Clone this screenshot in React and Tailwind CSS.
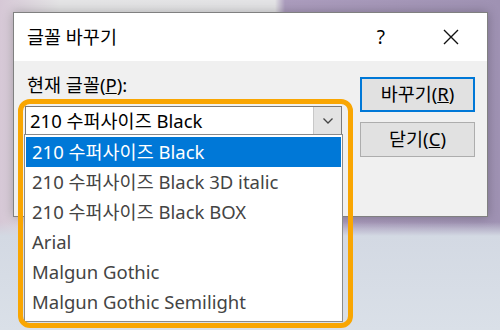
import React from 'react';

const fonts = [
  '210 수퍼사이즈 Black',
  '210 수퍼사이즈 Black 3D italic',
  '210 수퍼사이즈 Black BOX',
  'Arial',
  'Malgun Gothic',
  'Malgun Gothic Semilight',
];

const Hotkey = ({ label, k }) => (
  <span>
    {label}(<span className="underline underline-offset-1">{k}</span>)
  </span>
);

const App = () => {
  return (
    <div className="relative w-[500px] h-[330px] overflow-hidden pl-[13px] pt-[12px] font-['Noto_Sans','Noto_Sans_CJK_KR',sans-serif] text-black bg-[linear-gradient(180deg,rgba(0,0,0,0)_0,rgba(0,0,0,0)_222px,#d3d9e3_236px,#dae0e8_100%),linear-gradient(90deg,#d6c8d6_0,#e4e4e5_12%,#e3e3e5_55%,#ab9cbd_57%,#9f92b3_100%)]">
      {/* dialog window */}
      <div className="w-[475px] h-[205px] flex flex-col border border-[#808080] bg-[#f0f0f0] shadow-[0_0_10px_rgba(0,0,0,0.25)]">
        <div className="h-[48px] bg-white flex items-center pl-[13px] shrink-0">
          <span className="text-[18.5px] leading-none">글꼴 바꾸기</span>
          <span className="ml-auto text-[19px] leading-none mr-[58px]">?</span>
          <svg width="16" height="16" viewBox="0 0 16 16" className="mr-[28px]">
            <path d="M1 1 L15 15 M15 1 L1 15" stroke="#111" strokeWidth="1.4" />
          </svg>
        </div>

        <div className="flex flex-1 pl-[11px] pr-[12px]">
          <div className="flex flex-col pt-[12px]">
            <span className="ml-[2px] text-[18.5px] leading-[24px]">
              현재 <Hotkey label="글꼴" k="P" />:
            </span>
            <div className="mt-[9px] w-[317px] h-[29px] flex bg-white border border-[#7a7a7a]">
              <span className="flex-1 pl-[4px] text-[18.5px] leading-[27px]">210 수퍼사이즈 Black</span>
              <div className="w-[28px] flex items-center justify-center bg-[#e3e3e3] border-l border-[#c8c8c8]">
                <svg width="12" height="8" viewBox="0 0 12 8">
                  <path d="M1.5 1.5 L6 6 L10.5 1.5" fill="none" stroke="#444" strokeWidth="1.3" />
                </svg>
              </div>
            </div>
          </div>

          <div className="ml-auto flex flex-col gap-[10px] pt-[16px]">
            <button className="w-[115px] h-[35px] border-2 border-[#0078d7] bg-[#e1e1e1] text-[18.5px] leading-none">
              <Hotkey label="바꾸기" k="R" />
            </button>
            <button className="w-[115px] h-[35px] border border-[#adadad] bg-[#e1e1e1] text-[18.5px] leading-none">
              <Hotkey label="닫기" k="C" />
            </button>
          </div>
        </div>
      </div>

      {/* opened dropdown list */}
      <div className="absolute left-[24px] top-[134px] w-[319px] h-[188px] bg-white border border-[#8a8a8a] pt-[2px] px-[1px]">
        {fonts.map((f, i) => (
          <div
            key={f}
            className={
              i === 0
                ? 'h-[30px] pl-[6px] flex items-center text-[18.5px] bg-[#0078d7] text-white'
                : 'h-[30px] pl-[6px] flex items-center text-[18.5px] text-[#444]'
            }
          >
            {f}
          </div>
        ))}
      </div>

      {/* highlight annotation */}
      <div className="absolute left-[18px] top-[99px] w-[335px] h-[229px] border-[5px] border-[#f9a602] rounded-[12px] pointer-events-none" />
    </div>
  );
};

export default App;
